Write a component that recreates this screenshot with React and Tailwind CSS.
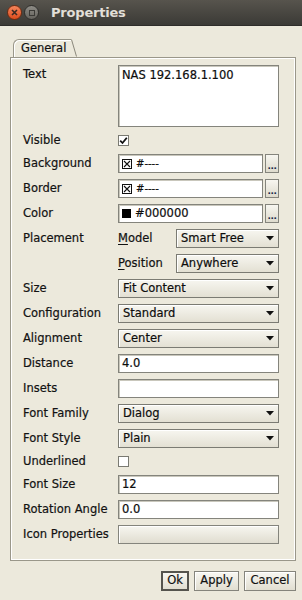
import React from "react";

const font = { fontFamily: '"DejaVu Sans", Verdana, sans-serif' };

function Arrow() {
  return (
    <svg width="8" height="5" viewBox="0 0 8 5" className="shrink-0">
      <path d="M0 0 H8 L4 4.5 Z" fill="#111" />
    </svg>
  );
}

function Combo({ value, className = "" }) {
  return (
    <div
      className={`h-[19px] flex items-center justify-between pl-[4px] pr-[4px] border border-[#7b7b73] bg-gradient-to-b from-[#f7f6f0] to-[#e3e0d3] shadow-[inset_1px_1px_0_#ffffff] text-[11.5px] text-[#0d0d0d] [-webkit-text-stroke:0.2px_#0d0d0d] ${className}`}
    >
      <span>{value}</span>
      <Arrow />
    </div>
  );
}

function Field({ children, className = "" }) {
  return (
    <div
      className={`h-[19px] flex items-center gap-[4px] pl-[3px] bg-white border border-[#84847c] shadow-[inset_1px_1px_0_#c9c7bc] text-[11.5px] text-[#0d0d0d] [-webkit-text-stroke:0.2px_#0d0d0d] ${className}`}
    >
      {children}
    </div>
  );
}

function DotsButton() {
  return (
    <div className="w-[14px] h-[19px] border border-[#84847c] bg-gradient-to-b from-[#f7f6f0] to-[#dedbcd] flex items-end justify-center pb-[3px]">
      <span className="text-[9px] leading-[6px] font-bold text-[#1b2a4a] tracking-[-0.5px]">...</span>
    </div>
  );
}

function XBox() {
  return (
    <svg width="10" height="10" viewBox="0 0 10 10" className="shrink-0">
      <rect x="0.5" y="0.5" width="9" height="9" fill="white" stroke="#111" />
      <path d="M2 2 L8 8 M8 2 L2 8" stroke="#111" strokeWidth="1.1" />
    </svg>
  );
}

function Checkbox({ checked }) {
  return (
    <div className="w-[11px] h-[11px] border border-[#7a7a72] bg-white flex items-center justify-center">
      {checked && (
        <svg width="9" height="9" viewBox="0 0 9 9">
          <path d="M1.2 4.6 L3.5 7 L7.8 1.8" fill="none" stroke="#111" strokeWidth="1.8" />
        </svg>
      )}
    </div>
  );
}

const labelCls = "text-[11.5px] text-[#121212] [-webkit-text-stroke:0.2px_#121212] whitespace-nowrap";

function Row({ label, children, h = "h-[19px]" }) {
  return (
    <div className={`flex items-center ${h}`}>
      <div className={`w-[95px] shrink-0 ${labelCls}`}>{label}</div>
      <div className="w-[161px] flex items-center">{children}</div>
    </div>
  );
}

function Btn({ children, def, w }) {
  return (
    <div
      className={`h-[20px] ${w} flex items-center justify-center bg-gradient-to-b from-[#f8f7f2] to-[#e1ded1] text-[11.5px] text-[#111] [-webkit-text-stroke:0.2px_#111] ${
        def ? "border-2 border-[#55544e]" : "border border-[#85847c] shadow-[inset_1px_1px_0_#ffffff]"
      }`}
    >
      {children}
    </div>
  );
}

export default function App() {
  return (
    <div className="w-[302px] h-[600px] bg-[#ece9dc] overflow-hidden" style={font}>
      {/* title bar */}
      <div className="h-[26px] bg-gradient-to-b from-[#57544d] to-[#3b3a36] flex items-center pl-[7px] border-b border-[#2e2d2a]">
        <div className="w-[15px] h-[15px] rounded-full bg-gradient-to-b from-[#f4845a] to-[#dc4c1a] border border-[#6b2b12] flex items-center justify-center">
          <svg width="7" height="7" viewBox="0 0 7 7">
            <path d="M1 1 L6 6 M6 1 L1 6" stroke="#3a2a22" strokeWidth="1.6" />
          </svg>
        </div>
        <div className="ml-[2px] w-[15px] h-[15px] rounded-full bg-gradient-to-b from-[#8e8c86] to-[#65635d] border border-[#2f2e2b] flex items-center justify-center">
          <div className="w-[6px] h-[6px] border border-[#3b3a36]" />
        </div>
        <div className="ml-[12px] text-[13px] font-bold text-[#e2dfd8] tracking-[-0.2px]">Properties</div>
      </div>

      {/* tab */}
      <div className="pl-[13px] pt-[13px] flex items-end h-[31px]">
        <div className={`h-[18px] w-[58px] border-l border-t border-[#9a978a] rounded-tl-[6px] bg-[#ece9dc] flex items-center pl-[7px] shadow-[inset_1px_1px_0_#ffffff] ${labelCls}`}>
          General
        </div>
        <svg width="6" height="18" viewBox="0 0 6 18" className="shrink-0">
          <path d="M0.5 0.5 L5.5 17.5" stroke="#8a877b" strokeWidth="1" />
        </svg>
      </div>

      {/* panel */}
      <div className="ml-[10px] w-[286px] h-[504px] border border-[#9a978a] shadow-[inset_1px_1px_0_#ffffff,inset_-1px_-1px_0_#ffffff] pl-[12px] pt-[7px]">
        <div className="flex flex-col gap-[6px]">
          <div className="flex h-[62px]">
            <div className={`w-[95px] shrink-0 pt-[1px] ${labelCls}`}>Text</div>
            <div className="w-[161px] h-[62px] bg-white border border-[#84847c] shadow-[inset_1px_1px_0_#c9c7bc] pl-[3px] pt-[1px] text-[11.5px] text-[#0d0d0d] [-webkit-text-stroke:0.2px_#0d0d0d]">
              NAS 192.168.1.100
            </div>
          </div>
          <Row label="Visible" h="h-[15px]">
            <Checkbox checked />
          </Row>
          <Row label="Background">
            <Field className="w-[145px]">
              <XBox />
              <span className="text-[10px]">#----</span>
            </Field>
            <div className="ml-[2px]">
              <DotsButton />
            </div>
          </Row>
          <Row label="Border">
            <Field className="w-[145px]">
              <XBox />
              <span className="text-[10px]">#----</span>
            </Field>
            <div className="ml-[2px]">
              <DotsButton />
            </div>
          </Row>
          <Row label="Color">
            <Field className="w-[145px]">
              <div className="w-[9px] h-[9px] bg-black shrink-0" />
              <span>#000000</span>
            </Field>
            <div className="ml-[2px]">
              <DotsButton />
            </div>
          </Row>
          <Row label="Placement">
            <span className={`w-[58px] ${labelCls}`}>
              <span className="underline underline-offset-2">M</span>odel
            </span>
            <Combo value="Smart Free" className="w-[103px]" />
          </Row>
          <Row label="">
            <span className={`w-[58px] ${labelCls}`}>
              <span className="underline underline-offset-2">P</span>osition
            </span>
            <Combo value="Anywhere" className="w-[103px]" />
          </Row>
          <Row label="Size">
            <Combo value="Fit Content" className="w-[161px]" />
          </Row>
          <Row label="Configuration">
            <Combo value="Standard" className="w-[161px]" />
          </Row>
          <Row label="Alignment">
            <Combo value="Center" className="w-[161px]" />
          </Row>
          <Row label="Distance">
            <Field className="w-[161px]">4.0</Field>
          </Row>
          <Row label="Insets">
            <Field className="w-[161px]" />
          </Row>
          <Row label="Font Family">
            <Combo value="Dialog" className="w-[161px]" />
          </Row>
          <Row label="Font Style">
            <Combo value="Plain" className="w-[161px]" />
          </Row>
          <Row label="Underlined" h="h-[15px]">
            <Checkbox />
          </Row>
          <Row label="Font Size">
            <Field className="w-[161px]">12</Field>
          </Row>
          <Row label="Rotation Angle">
            <Field className="w-[161px]">0.0</Field>
          </Row>
          <Row label="Icon Properties">
            <div className="w-[161px] h-[19px] border border-[#84847c] bg-gradient-to-b from-[#f7f6f0] to-[#e0ddd0] shadow-[inset_1px_1px_0_#ffffff]" />
          </Row>
        </div>
      </div>

      {/* buttons */}
      <div className="mt-[10px] w-[296px] flex justify-end gap-[5px]">
        <Btn def w="w-[28px]">Ok</Btn>
        <Btn w="w-[45px]">Apply</Btn>
        <Btn w="w-[52px]">Cancel</Btn>
      </div>
    </div>
  );
}
